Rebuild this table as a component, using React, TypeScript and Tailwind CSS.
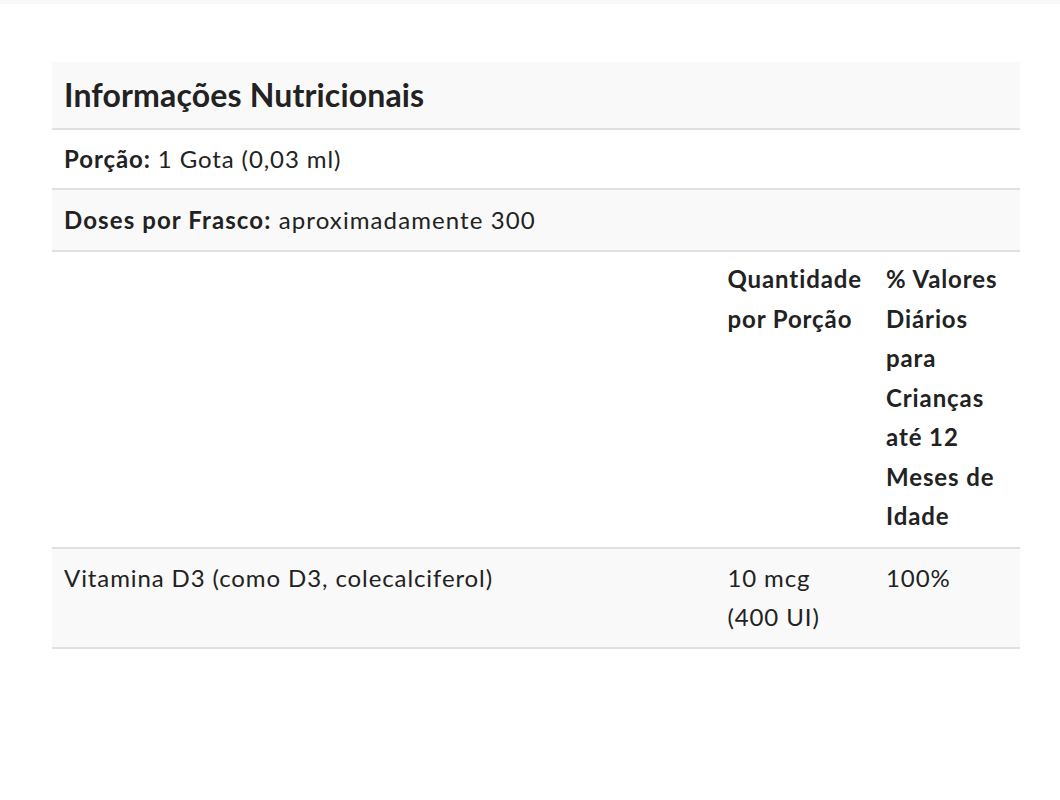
import React from 'react';

const rowBorder = 'border-b-2 border-[#e0e0e0]';

const App: React.FC = () => {
  return (
    <div className="w-[1060px] h-[800px] bg-white text-[#222] [font-family:Lato,'Noto_Sans',sans-serif]">
      <div className="h-[4px] bg-[#f8f8f8]" />
      <div className="pl-[52px] pr-[40px] pt-[58px]">
        <table className="w-full border-collapse text-[24px] leading-[39.5px] tracking-[0.9px]">
          <tbody>
            <tr className={`bg-[#f9f9f9] ${rowBorder}`}>
              <td colSpan={3} className="px-3 pt-[10px] pb-[10px] text-[32px] leading-[46px] font-bold tracking-[0.15px]">
                Informações Nutricionais
              </td>
            </tr>
            <tr className={`bg-white ${rowBorder}`}>
              <td colSpan={3} className="px-3 py-[9px]">
                <span className="font-bold">Porção:</span> 1 Gota (0,03 ml)
              </td>
            </tr>
            <tr className={`bg-[#f9f9f9] ${rowBorder}`}>
              <td colSpan={3} className="px-3 pt-[10px] pb-[11px] tracking-[1.1px]">
                <span className="font-bold">Doses por Frasco:</span> aproximadamente 300
              </td>
            </tr>
            <tr className={`bg-white ${rowBorder}`}>
              <td className="px-3 pt-[7px] pb-[11px]" />
              <td className="w-[158px] px-3 pt-[7px] pb-[11px] align-top font-bold">
                Quantidade por Porção
              </td>
              <td className="w-[146px] px-3 pt-[7px] pb-[11px] align-top font-bold">
                % Valores Diários para Crianças até 12 Meses de Idade
              </td>
            </tr>
            <tr className={`bg-[#f9f9f9] ${rowBorder}`}>
              <td className="px-3 pt-[9px] pb-[10px] align-top">
                Vitamina D3 (como D3, colecalciferol)
              </td>
              <td className="px-3 pt-[9px] pb-[10px] align-top">10 mcg (400 UI)</td>
              <td className="px-3 pt-[9px] pb-[10px] align-top">100%</td>
            </tr>
          </tbody>
        </table>
      </div>
    </div>
  );
};

export default App;
